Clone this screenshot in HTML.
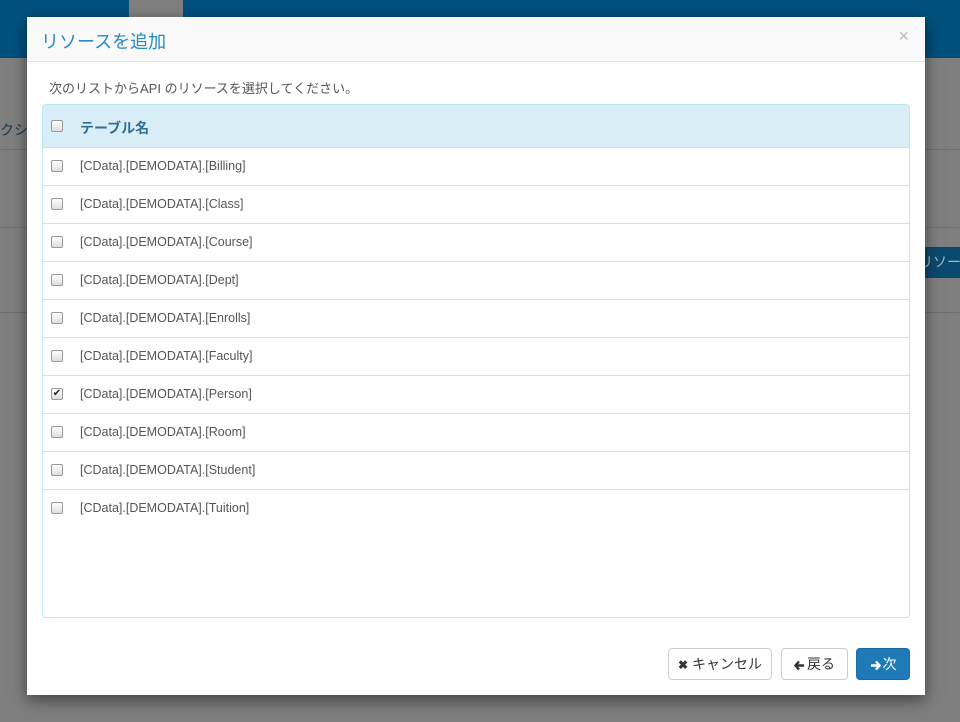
<!DOCTYPE html>
<html><head><meta charset="utf-8"><style>
*{box-sizing:border-box}
body{margin:0;width:960px;height:722px;overflow:hidden;background:#7f7f7f;font-family:"Liberation Sans","Noto Sans CJK JP",sans-serif;position:relative}
.bar{position:absolute;left:0;top:0;width:960px;height:58px;background:#00507e}
.gb{position:absolute;left:129px;top:0;width:54px;height:17px;background:#808080}
.ln{position:absolute;left:0;width:960px;height:1px;background:#6f6f6f}
.bb{position:absolute;left:913px;top:247px;width:47px;height:31px;background:#0b4a70;color:#9bb;font-size:14px;line-height:31px;padding-left:6px;overflow:hidden;white-space:nowrap}
.bt{position:absolute;left:0;top:120px;color:#1a3a4a;font-size:14px}
.modal{position:absolute;left:27px;top:17px;width:898px;height:678px;background:#fff;box-shadow:0 5px 15px rgba(0,0,0,.5)}
.hd{height:45px;background:#f9f9f9;border-bottom:1px solid #e5e5e5;position:relative}
.hd h4{margin:0;position:absolute;left:14px;top:11px;font-size:18px;font-weight:normal;color:#2a8ac4}
.x{position:absolute;right:16px;top:9px;color:#bbb;font-size:18px}
.desc{position:absolute;left:22px;top:61px;font-size:13px;color:#555}
.tbl{position:absolute;left:15px;top:87px;width:868px;height:514px;border:1px solid #bce8f1;border-radius:4px;overflow:hidden}
.th{height:43px;background:#d9edf7;border-bottom:1px solid #bce8f1;position:relative;font-weight:bold;color:#31708f;font-size:14px}
.row{height:38px;border-bottom:1px solid #ddd;position:relative;font-size:12.5px;color:#555}
.row:last-child{border-bottom:none}
.cb{position:absolute;left:8px;width:12px;height:12px;border:1px solid #999;border-radius:2px;background:linear-gradient(#fff,#ddd)}
.th .cb{top:15px}.row .cb{top:12px}
.lbl{position:absolute;left:37px}
.th .lbl{top:13px}.row .lbl{top:11px}
.btn{position:absolute;top:631px;height:32px;border:1px solid #ccc;border-radius:4px;background:#fff;font-size:14px;color:#333;line-height:30px;text-align:center;white-space:nowrap}
.btn svg{vertical-align:-2px;margin-right:2px}
</style></head><body>
<div class="bar"></div><div class="gb"></div>
<div class="ln" style="top:149px"></div><div class="ln" style="top:227px"></div><div class="ln" style="top:312px"></div>
<div class="bt">クシ</div>
<div class="bb">リソー</div>
<div class="modal">
<div class="hd"><h4>リソースを追加</h4><span class="x">×</span></div>
<div class="desc">次のリストからAPI のリソースを選択してください。</div>
<div class="tbl">
<div class="th"><span class="cb"></span><span class="lbl">テーブル名</span></div>
<div class="row"><span class="cb"></span><span class="lbl">[CData].[DEMODATA].[Billing]</span></div>
<div class="row"><span class="cb"></span><span class="lbl">[CData].[DEMODATA].[Class]</span></div>
<div class="row"><span class="cb"></span><span class="lbl">[CData].[DEMODATA].[Course]</span></div>
<div class="row"><span class="cb"></span><span class="lbl">[CData].[DEMODATA].[Dept]</span></div>
<div class="row"><span class="cb"></span><span class="lbl">[CData].[DEMODATA].[Enrolls]</span></div>
<div class="row"><span class="cb"></span><span class="lbl">[CData].[DEMODATA].[Faculty]</span></div>
<div class="row"><span class="cb" style="font-size:10px;line-height:10px;text-align:center;color:#222">✔</span><span class="lbl">[CData].[DEMODATA].[Person]</span></div>
<div class="row"><span class="cb"></span><span class="lbl">[CData].[DEMODATA].[Room]</span></div>
<div class="row"><span class="cb"></span><span class="lbl">[CData].[DEMODATA].[Student]</span></div>
<div class="row"><span class="cb"></span><span class="lbl">[CData].[DEMODATA].[Tuition]</span></div>
</div>
<div class="btn" style="left:641px;width:104px"><b style="font-size:12px">✖</b> キャンセル</div>
<div class="btn" style="left:754px;width:67px"><svg width="11" height="11" viewBox="0 0 11 11"><path d="M5 1.5L1.5 5.5L5 9.5M2 5.5H10" stroke="#333" stroke-width="2.4" fill="none"/></svg>戻る</div>
<div class="btn" style="left:829px;width:54px;background:#1f7ab8;border-color:#1a6ca5;color:#fff"><svg width="11" height="11" viewBox="0 0 11 11"><path d="M6 1.5L9.5 5.5L6 9.5M1 5.5H9" stroke="#fff" stroke-width="2.4" fill="none"/></svg>次</div>
</div>
</body></html>
